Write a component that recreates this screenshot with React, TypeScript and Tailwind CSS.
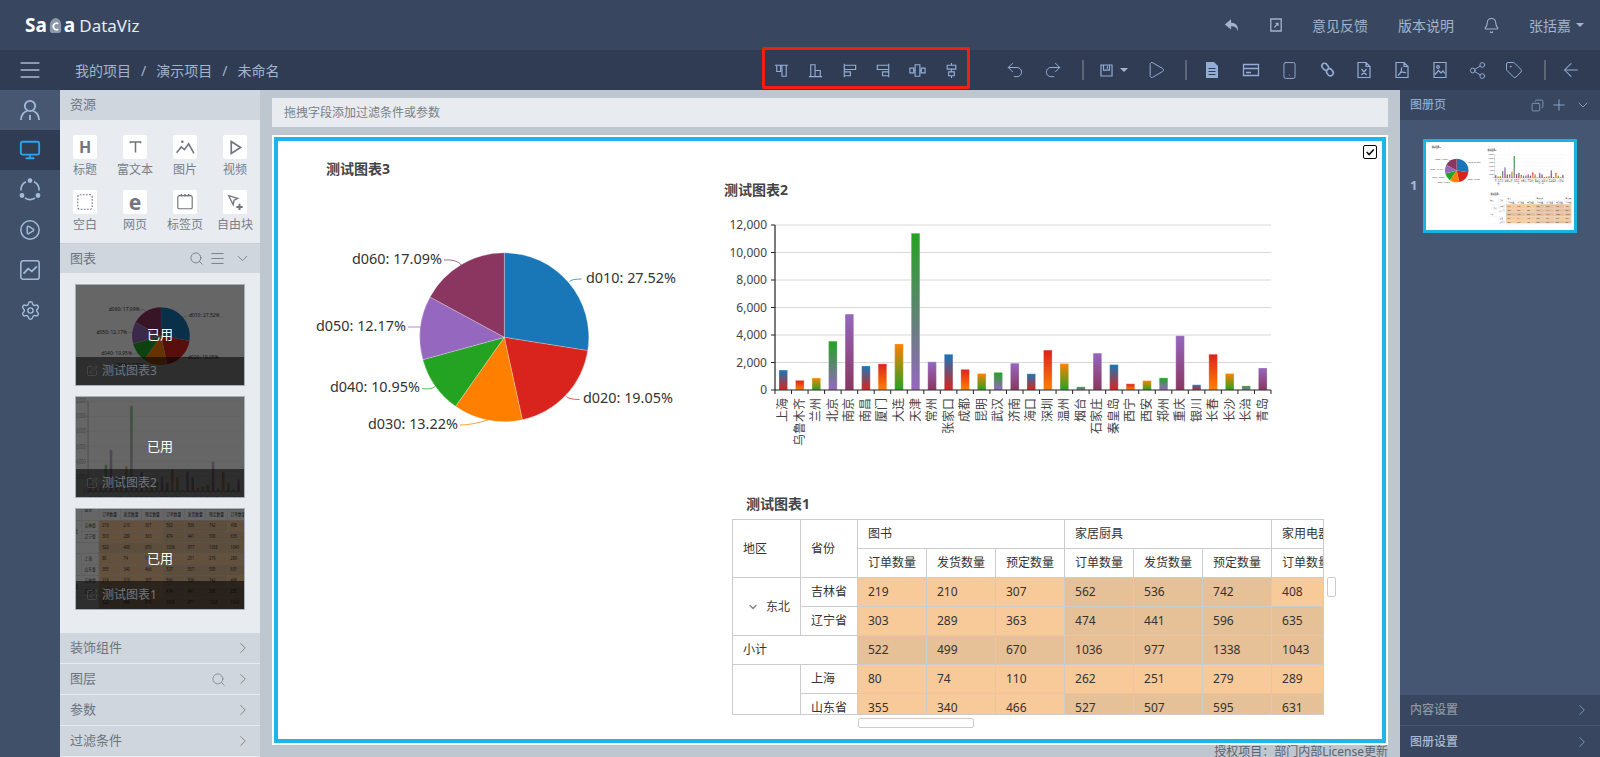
import type { ReactNode } from "react";
import {
  ArrowLeft,
  Bell,
  ChevronDown,
  ChevronRight,
  CirclePlay,
  Copy,
  Menu,
  Monitor,
  Play,
  Plus,
  Redo2,
  Search,
  Settings,
  Share2,
  Smartphone,
  SquarePen,
  Tag,
  Undo2,
} from "lucide-react";

const pieData = [
  { value: 27.52, color: "#1976b7" },
  { value: 19.05, color: "#d9241e" },
  { value: 13.22, color: "#ff8000" },
  { value: 10.95, color: "#24a322" },
  { value: 12.17, color: "#9567bf" },
  { value: 17.09, color: "#8b3660" },
];

// x, y relative to the pie svg, leader is start -> end of the small connector
const pieLabels = [
  { text: "d010: 27.52%", x: 286, y: 78, color: "#1976b7", leader: "M269.5 81.5 Q272 79 281.5 79" },
  { text: "d020: 19.05%", x: 283, y: 198, color: "#d9241e", leader: "M266.5 196.5 Q269 199.5 279.5 199.5" },
  { text: "d030: 13.22%", x: 68, y: 224, color: "#ff8000", leader: "M160 225 Q172 225 188 220" },
  { text: "d040: 10.95%", x: 30, y: 187, color: "#24a322", leader: "M122 188.5 Q131 190 135 186.5" },
  { text: "d050: 12.17%", x: 16, y: 126, color: "#9567bf", leader: "M108 127 L120.5 127" },
  { text: "d060: 17.09%", x: 52, y: 59, color: "#8b3660", leader: "M144 60 Q156 59 161.5 65" },
];

const gradients = [
  ["#1976b7", "#d9241e"],
  ["#d9241e", "#ff8000"],
  ["#ff8000", "#24a322"],
  ["#24a322", "#9567bf"],
  ["#9567bf", "#8b3660"],
];

const cities: [string, number][] = [
  ["上海", 1450], ["乌鲁木齐", 700], ["兰州", 870], ["北京", 3550], ["南京", 5520],
  ["南昌", 1750], ["厦门", 1900], ["大连", 3350], ["天津", 11400], ["常州", 2050],
  ["张家口", 2600], ["成都", 1500], ["昆明", 1200], ["武汉", 1280], ["济南", 1950],
  ["海口", 1180], ["深圳", 2900], ["温州", 1920], ["烟台", 230], ["石家庄", 2680],
  ["秦皇岛", 1850], ["西宁", 450], ["西安", 680], ["郑州", 880], ["重庆", 3950],
  ["银川", 380], ["长春", 2600], ["长沙", 1200], ["长治", 300], ["青岛", 1600],
];

function PieChart({ className }: { className: string }) {
  const cx = 204.3;
  const cy = 137.3;
  const r = 84.5;
  let acc = 0;
  return (
    <svg viewBox="0 0 400 280" className={className}>
      {pieData.map((d) => {
        const a0 = (acc / 100) * Math.PI * 2;
        acc += d.value;
        const a1 = (acc / 100) * Math.PI * 2;
        const large = a1 - a0 > Math.PI ? 1 : 0;
        const path = `M${cx} ${cy} L${cx + r * Math.sin(a0)} ${cy - r * Math.cos(a0)} A${r} ${r} 0 ${large} 1 ${cx + r * Math.sin(a1)} ${cy - r * Math.cos(a1)} Z`;
        return <path key={d.color} d={path} fill={d.color} stroke="#ffffff" strokeOpacity={0.45} strokeWidth={0.6} />;
      })}
      {pieLabels.map((l) => (
        <g key={l.text}>
          <path d={l.leader} fill="none" stroke={l.color} strokeOpacity={0.75} strokeWidth={1} />
          <text x={l.x} y={l.y + 5} fontSize={14.4} fill="#333333">
            {l.text}
          </text>
        </g>
      ))}
    </svg>
  );
}

function BarChart({ className }: { className: string }) {
  const left = 65;
  const right = 561;
  const top = 15;
  const bottom = 180;
  const step = (right - left) / cities.length;
  const yOf = (v: number) => bottom - ((bottom - top) * v) / 12000;
  return (
    <svg viewBox="0 0 580 245" preserveAspectRatio="none" className={className}>
      <defs>
        {gradients.map((g, i) => (
          <linearGradient key={i} id={`bar-${i}`} x1="0" y1="0" x2="0" y2="1">
            <stop offset="0" stopColor={g[0]} />
            <stop offset="1" stopColor={g[1]} />
          </linearGradient>
        ))}
      </defs>
      {[0, 2000, 4000, 6000, 8000, 10000, 12000].map((v) => (
        <g key={v}>
          {v > 0 && <line x1={left} x2={right} y1={yOf(v)} y2={yOf(v)} stroke="#d8d8d8" strokeWidth={1} />}
          <line x1={left - 4} x2={left} y1={yOf(v)} y2={yOf(v)} stroke="#222222" />
          <text x={57} y={yOf(v) + 4} textAnchor="end" fontSize={12} fill="#444444">
            {v.toLocaleString("en-US")}
          </text>
        </g>
      ))}
      {cities.map(([name, v], i) => (
        <g key={name}>
          <rect
            x={left + i * step + (step - 8.6) / 2}
            y={yOf(v)}
            width={8.6}
            height={bottom - yOf(v)}
            fill={`url(#bar-${i % 5})`}
            stroke="#ffffff"
            strokeOpacity={0.25}
          />
          <line x1={left + i * step} x2={left + i * step} y1={bottom} y2={bottom + 4} stroke="#222222" />
          <text
            transform={`translate(${left + (i + 0.5) * step + 4} ${bottom + 8}) rotate(-90)`}
            textAnchor="end"
            fontSize={12}
            fill="#444444"
          >
            {name}
          </text>
        </g>
      ))}
      <line x1={right} x2={right} y1={bottom} y2={bottom + 4} stroke="#222222" />
      <line x1={left} x2={left} y1={top} y2={bottom} stroke="#222222" strokeWidth={1.2} />
      <line x1={left} x2={right} y1={bottom} y2={bottom} stroke="#222222" strokeWidth={1.2} />
    </svg>
  );
}

type TableRow = {
  region?: { text: string; span: number; arrow?: boolean };
  province?: string;
  subtotal?: boolean;
  values: { v: string; dark: boolean }[];
};

function makeValues(vals: string[], dark: boolean[]) {
  return vals.map((v, i) => ({ v, dark: dark[i] }));
}

const L = false;
const D = true;

const tableRows: TableRow[] = [
  {
    region: { text: "东北", span: 2, arrow: true },
    province: "吉林省",
    values: makeValues(["219", "210", "307", "562", "536", "742", "408"], [L, L, L, D, D, D, L]),
  },
  {
    province: "辽宁省",
    values: makeValues(["303", "289", "363", "474", "441", "596", "635"], [L, L, L, D, D, D, D]),
  },
  {
    subtotal: true,
    values: makeValues(["522", "499", "670", "1036", "977", "1338", "1043"], [D, D, D, D, D, D, D]),
  },
  {
    region: { text: "", span: 2 },
    province: "上海",
    values: makeValues(["80", "74", "110", "262", "251", "279", "289"], [L, L, L, L, L, L, L]),
  },
  {
    province: "山东省",
    values: makeValues(["355", "340", "466", "527", "507", "595", "631"], [L, L, L, D, D, D, D]),
  },
];

function DataTable({ rows, className }: { rows: TableRow[]; className?: string }) {
  const cell = "h-[29px] border border-[#cccccc] px-[10px] text-left font-normal whitespace-nowrap";
  return (
    <table
      className={`w-[660px] table-fixed border-collapse bg-white text-[12px] text-[#333333] ${className ?? ""}`}
    >
      <colgroup>
        <col className="w-[68px]" />
        <col className="w-[57px]" />
        {[0, 1, 2, 3, 4, 5, 6, 7].map((i) => (
          <col key={i} className="w-[69px]" />
        ))}
      </colgroup>
      <thead>
        <tr>
          <th rowSpan={2} className={cell}>地区</th>
          <th rowSpan={2} className={cell}>省份</th>
          <th colSpan={3} className={cell}>图书</th>
          <th colSpan={3} className={cell}>家居厨具</th>
          <th colSpan={2} className={cell}>家用电器</th>
        </tr>
        <tr>
          {["订单数量", "发货数量", "预定数量", "订单数量", "发货数量", "预定数量", "订单数量", "发货数量"].map((t, i) => (
            <th key={i} className={cell}>{t}</th>
          ))}
        </tr>
      </thead>
      <tbody>
        {rows.map((row, i) => (
          <tr key={i}>
            {row.subtotal && <td colSpan={2} className={cell}>小计</td>}
            {row.region && (
              <td rowSpan={row.region.span} className={cell}>
                {row.region.arrow && (
                  <span className="flex items-center justify-end gap-[7px] pl-[3px] text-[#444444]">
                    <ChevronDown size={12} strokeWidth={3} className="text-[#888888]" />
                    {row.region.text}
                  </span>
                )}
              </td>
            )}
            {row.province && <td className={cell}>{row.province}</td>}
            {row.values.map((c, j) => (
              <td key={j} className={`${cell} ${c.dark ? "bg-[#e6c097]" : "bg-[#f8ca9a]"}`}>
                {c.v}
              </td>
            ))}
            <td className={`${cell} bg-[#f8ca9a]`}>1</td>
          </tr>
        ))}
      </tbody>
    </table>
  );
}

function ReportContent({ className }: { className?: string }) {
  const title = "absolute text-[14px] leading-5 font-bold text-[#444444]";
  return (
    <div className={`relative h-[598px] w-[1104px] bg-white ${className ?? ""}`}>
      <div className={`${title} left-[48px] top-[18px]`}>测试图表3</div>
      <PieChart className="absolute left-[22px] top-[59px] h-[280px] w-[400px]" />
      <div className={`${title} left-[446px] top-[39px]`}>测试图表2</div>
      <BarChart className="absolute left-[432px] top-[69px] h-[245px] w-[580px]" />
      <div className={`${title} left-[468px] top-[353px]`}>测试图表1</div>
      <div className="absolute left-[454px] top-[378px] h-[196px] w-[592px] overflow-hidden border-b border-r border-[#cccccc]">
        <DataTable rows={tableRows} />
      </div>
      <div className="absolute left-[1049px] top-[436px] h-5 w-[9px] rounded-[2px] border border-[#cccccc] bg-white" />
      <div className="absolute left-[580px] top-[577px] h-[10px] w-[116px] rounded-[2px] border border-[#cccccc] bg-white" />
    </div>
  );
}

function Glyph({ d, size = 20, fill = "none", width = 1.4 }: { d: string; size?: number; fill?: string; width?: number }) {
  return (
    <svg viewBox="0 0 20 20" width={size} height={size} fill={fill} stroke={fill === "none" ? "currentColor" : "none"} strokeWidth={width}>
      <path d={d} />
    </svg>
  );
}

const alignIcons = [
  "M3 4.5 H17 M5 4.5 V11 H9 V4.5 M10.5 4.5 V16 H15 V4.5",
  "M3 16.5 H17 M5 16.5 V4 H9.5 V16.5 M9.5 16.5 V10 H15 V16.5",
  "M4.5 3 V17 M4.5 4.5 H16.5 V9 H4.5 M4.5 11.5 H11 V15.5 H4.5",
  "M15.5 3 V17 M15.5 4.5 H3.5 V9 H15.5 M15.5 11.5 H9 V15.5 H15.5",
  "M2 7.5 H6 V12.5 H2 Z M7.5 4 H12.5 V16 H7.5 Z M14 7.5 H18 V12.5 H14 Z M6 10 H7.5 M12.5 10 H14",
  "M10 2 V4.5 M5.5 4.5 H14.5 V8.5 H5.5 Z M10 8.5 V11.5 M7 11.5 H13 V15.5 H7 Z M10 15.5 V18",
];

const saveIcon = "M3.5 3.5 H16.5 V16.5 H3.5 Z M6.5 3.5 V9.5 H13.5 V3.5 M11 5 V8";
const cardIcon = "M2.5 4.5 H17.5 V15.5 H2.5 Z M2.5 8.5 H17.5 M5 12.5 H10";
const linkIcon = "M5 3.5 a3 3 0 0 1 4.5 0 l2 2.5 a3 3 0 0 1 -4 4 l-2.5 -2.5 a3 3 0 0 1 0 -4 Z M10.5 9.5 a3 3 0 0 1 4.5 0 l1 1.5 a3 3 0 0 1 -4.5 4.5 l-1.5 -2 a3 3 0 0 1 .5 -4 Z";
const excelIcon = "M4 2.5 H12 L16 6.5 V17.5 H4 Z M12 2.5 V6.5 H16 M7.5 9 L12.5 15 M12.5 9 L7.5 15";
const pdfIcon = "M4 2.5 H12 L16 6.5 V17.5 H4 Z M12 2.5 V6.5 H16 M9.5 7.5 C10 11 8 14 6 15.5 M8 12.5 C10 12 12.5 12 14 13";
const imgIcon = "M4 2.5 H16 V17.5 H4 Z M5 14.5 L8.5 10.5 L11 13 L13 11 L15 13.5 M8 7 m-1.3 0 a1.3 1.3 0 1 0 2.6 0 a1.3 1.3 0 1 0 -2.6 0";
const docFilled = "M4 2 H12 L16 6 V18 H4 Z M6.5 8 V9 H13.5 V8 Z M6.5 11 V12 H13.5 V11 Z M6.5 14 V15 H13.5 V14 Z";

function TopBar() {
  return (
    <header className="flex h-[50px] shrink-0 items-center bg-[#38475f] text-[#a3b4cc]">
      <div className="ml-[25px] flex items-center text-white">
        <span className="text-[19px] font-bold leading-none">Sa</span>
        <svg viewBox="0 0 16 20" className="mx-[1px] h-[21px] w-[15px]">
          <path d="M8 2 a6 7 0 0 1 6 7 v6 a3 3 0 0 1 -3 3 h-6 a3 3 0 0 1 -3 -3 v-5 a7 8 0 0 1 6 -8 Z" fill="#8c98aa" />
          <path d="M11 8 a3.5 3.5 0 1 0 0 6" fill="none" stroke="#ffffff" strokeWidth={1.8} />
        </svg>
        <span className="text-[19px] font-bold leading-none">a</span>
        <span className="ml-[4px] text-[17px] leading-none text-[#e6eaf0]">DataViz</span>
      </div>
      <div className="ml-auto flex items-center text-[14px]">
        <Glyph size={18} fill="#a3b4cc" d="M9 3.5 L2 9.5 L9 15 V11.5 C13 11.5 15.5 13 16.5 17 C17.5 11 14 7.5 9 7.5 Z" />
        <span className="ml-[27px] text-[#a3b4cc]">
          <Glyph size={16} width={1.6} d="M3.5 2.5 H16.5 V17.5 H3.5 Z M8 13 L12.5 8 M9.5 8 H12.5 V11" />
        </span>
        <span className="ml-[28px]">意见反馈</span>
        <span className="ml-[30px]">版本说明</span>
        <Bell size={17} strokeWidth={1.5} className="ml-[29px]" />
        <span className="ml-[29px]">张括嘉</span>
        <span className="ml-[5px] mr-[16px] h-0 w-0 border-x-[4px] border-t-[4px] border-x-transparent border-t-[#a3b4cc]" />
      </div>
    </header>
  );
}

function ToolSlot({ children, w = "w-[38px]" }: { children: ReactNode; w?: string }) {
  return <div className={`flex shrink-0 items-center justify-center ${w}`}>{children}</div>;
}

function Separator({ className }: { className: string }) {
  return <div className={`h-[20px] w-[2px] shrink-0 bg-[#5d6673] ${className}`} />;
}

function Toolbar() {
  return (
    <div className="flex h-10 shrink-0 items-center bg-[#2f3c54] text-[#93add6]">
      <Menu size={24} strokeWidth={1.5} className="ml-[18px] w-6 scale-x-110 text-[#a9b8d0]" />
      <nav className="ml-[33px] flex w-[689px] items-center gap-[10px] text-[14px] text-[#a3b4cc]">
        <span>我的项目</span>
        <span>/</span>
        <span>演示项目</span>
        <span>/</span>
        <span>未命名</span>
      </nav>
      <div className="relative flex h-10 w-[204px] shrink-0 items-center">
        {alignIcons.map((d) => (
          <ToolSlot key={d} w="w-[34px]">
            <Glyph size={19} width={1.2} d={d} />
          </ToolSlot>
        ))}
        <div className="absolute -top-[3px] bottom-[1px] -left-[2px] -right-[2px] rounded-[2px] border-[3px] border-[#f01f12]" />
      </div>
      <div className="ml-[28px] flex items-center">
        <ToolSlot><Undo2 size={20} strokeWidth={1.2} /></ToolSlot>
        <ToolSlot><Redo2 size={20} strokeWidth={1.2} /></ToolSlot>
        <Separator className="ml-[10px]" />
        <div className="ml-[14px] flex items-center">
          <Glyph size={17} d={saveIcon} />
          <span className="ml-[5px] h-0 w-0 border-x-[4px] border-t-[4px] border-x-transparent border-t-[#a3b4cc]" />
        </div>
        <ToolSlot w="w-[50px]"><Play size={20} strokeWidth={1.2} className="ml-[5px]" /></ToolSlot>
        <Separator className="ml-[7px]" />
        <ToolSlot w="w-[50px]"><Glyph size={20} fill="#93add6" d={docFilled} /></ToolSlot>
        <ToolSlot w="w-[28px]"><Glyph size={20} width={1.3} d={cardIcon} /></ToolSlot>
        <ToolSlot w="w-[48px]"><Smartphone size={19} strokeWidth={1.2} /></ToolSlot>
        <ToolSlot w="w-[28px]"><Glyph size={18} width={1.8} d={linkIcon} /></ToolSlot>
        <ToolSlot w="w-[46px]"><Glyph size={20} width={1.2} d={excelIcon} /></ToolSlot>
        <ToolSlot w="w-[30px]"><Glyph size={20} width={1.2} d={pdfIcon} /></ToolSlot>
        <ToolSlot w="w-[46px]"><Glyph size={20} width={1.2} d={imgIcon} /></ToolSlot>
        <ToolSlot w="w-[28px]"><Share2 size={19} strokeWidth={1.2} /></ToolSlot>
        <ToolSlot w="w-[46px]"><Tag size={18} strokeWidth={1.3} /></ToolSlot>
        <Separator className="ml-[7px]" />
        <ToolSlot w="w-[50px]"><ArrowLeft size={22} strokeWidth={1.1} /></ToolSlot>
      </div>
    </div>
  );
}

function Rail() {
  return (
    <aside className="flex w-[60px] shrink-0 flex-col bg-[#415069] text-[#a0bcdc]">
      <div className="flex h-10 items-center justify-center bg-[#475772]">
        <svg viewBox="0 0 24 24" width="24" height="24" fill="none" stroke="currentColor" strokeWidth={1.8}>
          <circle cx="12" cy="8" r="5.2" />
          <path d="M3 22 C3 16 7 13.5 9 13 M21 22 C21 16 17 13.5 15 13 M12 17 V22" />
        </svg>
      </div>
      <div className="flex h-10 items-center justify-center bg-[#2f3c54] text-[#2aa5ee]">
        <Monitor size={22} strokeWidth={2} />
      </div>
      <div className="flex h-10 items-center justify-center">
        <svg viewBox="0 0 24 24" width="24" height="24" fill="none" stroke="currentColor" strokeWidth={1.6}>
          <path d="M8 3.8 A9 9 0 0 0 3 12.5 M16 3.8 A9 9 0 0 1 21 12.5 M7 20 A9 9 0 0 0 17 20" />
          <circle cx="12" cy="2.6" r="1.6" fill="currentColor" />
          <circle cx="4" cy="17.5" r="1.6" fill="currentColor" />
          <circle cx="20" cy="17.5" r="1.6" fill="currentColor" />
        </svg>
      </div>
      <div className="flex h-10 items-center justify-center"><CirclePlay size={22} strokeWidth={1.6} /></div>
      <div className="flex h-10 items-center justify-center">
        <svg viewBox="0 0 24 24" width="22" height="22" fill="none" stroke="currentColor" strokeWidth={1.7}>
          <rect x="2" y="2" width="20" height="20" rx="2.5" />
          <path d="M5 16 L10 10.5 L14 13.5 L19.5 8" strokeWidth={2} />
        </svg>
      </div>
      <div className="flex h-10 items-center justify-center"><Settings size={21} strokeWidth={1.6} /></div>
    </aside>
  );
}

function WidgetTile({ label, children }: { label: string; children: ReactNode }) {
  return (
    <div className="flex w-[50px] flex-col items-center">
      <div className="flex h-6 w-6 items-center justify-center rounded-[2px] bg-white text-[#6f7680]">{children}</div>
      <span className="mt-[1px] whitespace-nowrap text-[12px] leading-[20px] text-[#777f8a]">{label}</span>
    </div>
  );
}

function ChartThumb({ name, children }: { name: string; children: ReactNode }) {
  return (
    <div className="relative h-[102px] w-[170px] overflow-hidden border border-[#a5b0bd] bg-white">
      {children}
      <div className="absolute inset-0 flex items-center justify-center bg-black/60 text-[13px] text-white">已用</div>
      <div className="absolute inset-x-0 bottom-0 flex h-[28px] items-center bg-black/55 pl-[10px] text-[12px] text-[#6b7885]">
        <SquarePen size={12} strokeWidth={1.2} className="text-[#555555]" />
        <span className="ml-[4px]">{name}</span>
      </div>
    </div>
  );
}

function Section({ title, search }: { title: string; search?: boolean }) {
  return (
    <div className="mb-[1px] flex h-[30px] items-center bg-[#d0d6de] pl-[10px] pr-[8px] text-[13px] text-[#6c7480]">
      <span>{title}</span>
      {search && <Search size={15} strokeWidth={1.3} className="ml-auto text-[#7c838d]" />}
      <ChevronRight size={18} strokeWidth={1.3} className={`text-[#8a8478] ${search ? "ml-[8px]" : "ml-auto"}`} />
    </div>
  );
}

function LeftPanel() {
  return (
    <section className="flex w-[200px] shrink-0 flex-col bg-[#e8ebf0]">
      <div className="flex h-[30px] items-center bg-[#d0d6de] pl-[10px] text-[13px] text-[#6c7480]">资源</div>
      <div className="h-[123px] pt-[15px]">
        <div className="grid grid-cols-4 gap-y-[10px]">
          <WidgetTile label="标题"><span className="text-[16px] font-bold leading-none">H</span></WidgetTile>
          <WidgetTile label="富文本">
            <Glyph size={17} width={1.8} d="M4 5 V3.5 H16 V5 M10 3.5 V16" />
          </WidgetTile>
          <WidgetTile label="图片">
            <svg viewBox="0 0 20 20" width="21" height="21" fill="none" stroke="currentColor" strokeWidth={1.5}>
              <path d="M1.5 15 L6 9.5 L9 12 L13 6.5 L18 15.5" />
              <circle cx="7" cy="4.5" r="1.2" fill="currentColor" stroke="none" />
            </svg>
          </WidgetTile>
          <WidgetTile label="视频">
            <Glyph size={17} width={2} d="M5 3 L16 10 L5 17 Z" />
          </WidgetTile>
          <WidgetTile label="空白">
            <svg viewBox="0 0 20 20" width="18" height="18" fill="none" stroke="currentColor" strokeWidth={1.2} strokeDasharray="2 1.5">
              <rect x="2" y="2" width="16" height="16" rx="2" />
            </svg>
          </WidgetTile>
          <WidgetTile label="网页"><span className="text-[21px] font-bold leading-none">e</span></WidgetTile>
          <WidgetTile label="标签页">
            <svg viewBox="0 0 20 20" width="18" height="18" fill="none" stroke="currentColor" strokeWidth={1.3}>
              <path d="M2 5 a2 2 0 0 1 2 -2 H16 a2 2 0 0 1 2 2 V16 a1.5 1.5 0 0 1 -1.5 1.5 H3.5 A1.5 1.5 0 0 1 2 16 Z" />
              <path d="M6 1 V4 M10 1 V4 M14 1 V4" strokeWidth={1.6} />
            </svg>
          </WidgetTile>
          <WidgetTile label="自由块">
            <svg viewBox="0 0 20 20" width="18" height="18" fill="none" stroke="currentColor" strokeWidth={1.5}>
              <path d="M3 3 L13 6 L9 8 L8 13 Z" />
              <path d="M15 12 V19 M11.5 15.5 H18.5" strokeWidth={2.2} />
            </svg>
          </WidgetTile>
        </div>
      </div>
      <div className="flex h-[30px] items-center border-t border-[#c6ccd5] bg-[#d0d6de] pl-[10px] pr-[9px] text-[13px] text-[#6c7480]">
        <span className="mr-auto">图表</span>
        <Search size={15} strokeWidth={1.3} />
        <Menu size={17} strokeWidth={1.2} className="ml-[5px]" />
        <ChevronDown size={17} strokeWidth={1.2} className="ml-[8px]" />
      </div>
      <div className="flex flex-1 flex-col items-center gap-[10px] pt-[11px]">
        <ChartThumb name="测试图表3">
          <PieChart className="absolute left-[15px] top-[4px] h-[96px] w-[137px]" />
        </ChartThumb>
        <ChartThumb name="测试图表2">
          <BarChart className="absolute left-[-8px] top-[-4px] h-[134px] w-[179px] opacity-50" />
        </ChartThumb>
        <ChartThumb name="测试图表1">
          <div className="absolute left-[-16px] top-[-11px] origin-top-left scale-x-[0.31] scale-y-[0.38]">
            <DataTable rows={[...tableRows, ...tableRows.slice(0, 3)]} />
          </div>
        </ChartThumb>
      </div>
      <Section title="装饰组件" />
      <Section title="图层" search />
      <Section title="参数" />
      <Section title="过滤条件" />
    </section>
  );
}

function MainArea() {
  return (
    <main className="flex min-w-0 flex-1 flex-col bg-[#bec6d0] px-3 pt-2">
      <div className="flex h-[29px] shrink-0 items-center bg-[#e8ebf0] pl-3 text-[12px] text-[#7a7f87]">
        拖拽字段添加过滤条件或参数
      </div>
      <div className="relative mt-2 h-[610px] shrink-0 border-2 border-white">
        <div className="h-full border-4 border-[#1fb5ea]">
          <ReportContent />
        </div>
        <div className="absolute right-[9px] top-[8px] flex h-[14px] w-[14px] items-center justify-center rounded-[2px] border border-black bg-white">
          <svg viewBox="0 0 12 12" width="10" height="10" fill="none" stroke="#111111" strokeWidth={2}>
            <path d="M2 6 L5 9 L10.5 3" />
          </svg>
        </div>
      </div>
      <div className="mt-[-1px] text-right text-[12px] leading-[16px] whitespace-nowrap text-[#5c636d]">
        授权项目：部门内部License更新
      </div>
    </main>
  );
}

function RightPanel() {
  return (
    <aside className="flex w-[200px] shrink-0 flex-col bg-[#455672]">
      <div className="flex h-[30px] items-center bg-[#38475f] pl-[10px] pr-[9px] text-[12px] font-medium text-[#8ea9cf]">
        <span className="mr-auto">图册页</span>
        <Copy size={13} strokeWidth={1.4} className="-scale-x-100" />
        <Plus size={18} strokeWidth={1.2} className="ml-[6px]" />
        <ChevronDown size={16} strokeWidth={1.2} className="ml-[7px]" />
      </div>
      <div className="flex flex-1 items-start pl-[10px] pt-[19px]">
        <span className="mt-[37px] w-[13px] text-[13px] font-bold text-[#a9b8d0]">1</span>
        <div className="h-[94px] w-[154px] border-[3px] border-[#1ab3e0] bg-white p-[2px]">
          <div className="relative h-full w-full overflow-hidden">
            <ReportContent className="absolute left-[-3px] top-[-1px] origin-top-left scale-[0.14]" />
          </div>
        </div>
      </div>
      <div className="flex h-[30px] items-center justify-between bg-[#38475f] pl-[10px] pr-[9px] text-[12px] font-medium text-[#8d95a3]">
        内容设置
        <ChevronRight size={18} strokeWidth={1.2} className="text-[#7f9cc7]" />
      </div>
      <div className="mt-[1px] flex h-[31px] items-center justify-between bg-[#38475f] pl-[10px] pr-[9px] text-[12px] font-medium text-[#a8b8d0]">
        图册设置
        <ChevronRight size={18} strokeWidth={1.2} className="text-[#7f9cc7]" />
      </div>
    </aside>
  );
}

export default function App() {
  return (
    <div className="flex h-screen w-full flex-col overflow-hidden font-['Noto_Sans','Noto_Sans_CJK_SC',sans-serif]">
      <TopBar />
      <Toolbar />
      <div className="flex min-h-0 flex-1">
        <Rail />
        <LeftPanel />
        <MainArea />
        <RightPanel />
      </div>
    </div>
  );
}
